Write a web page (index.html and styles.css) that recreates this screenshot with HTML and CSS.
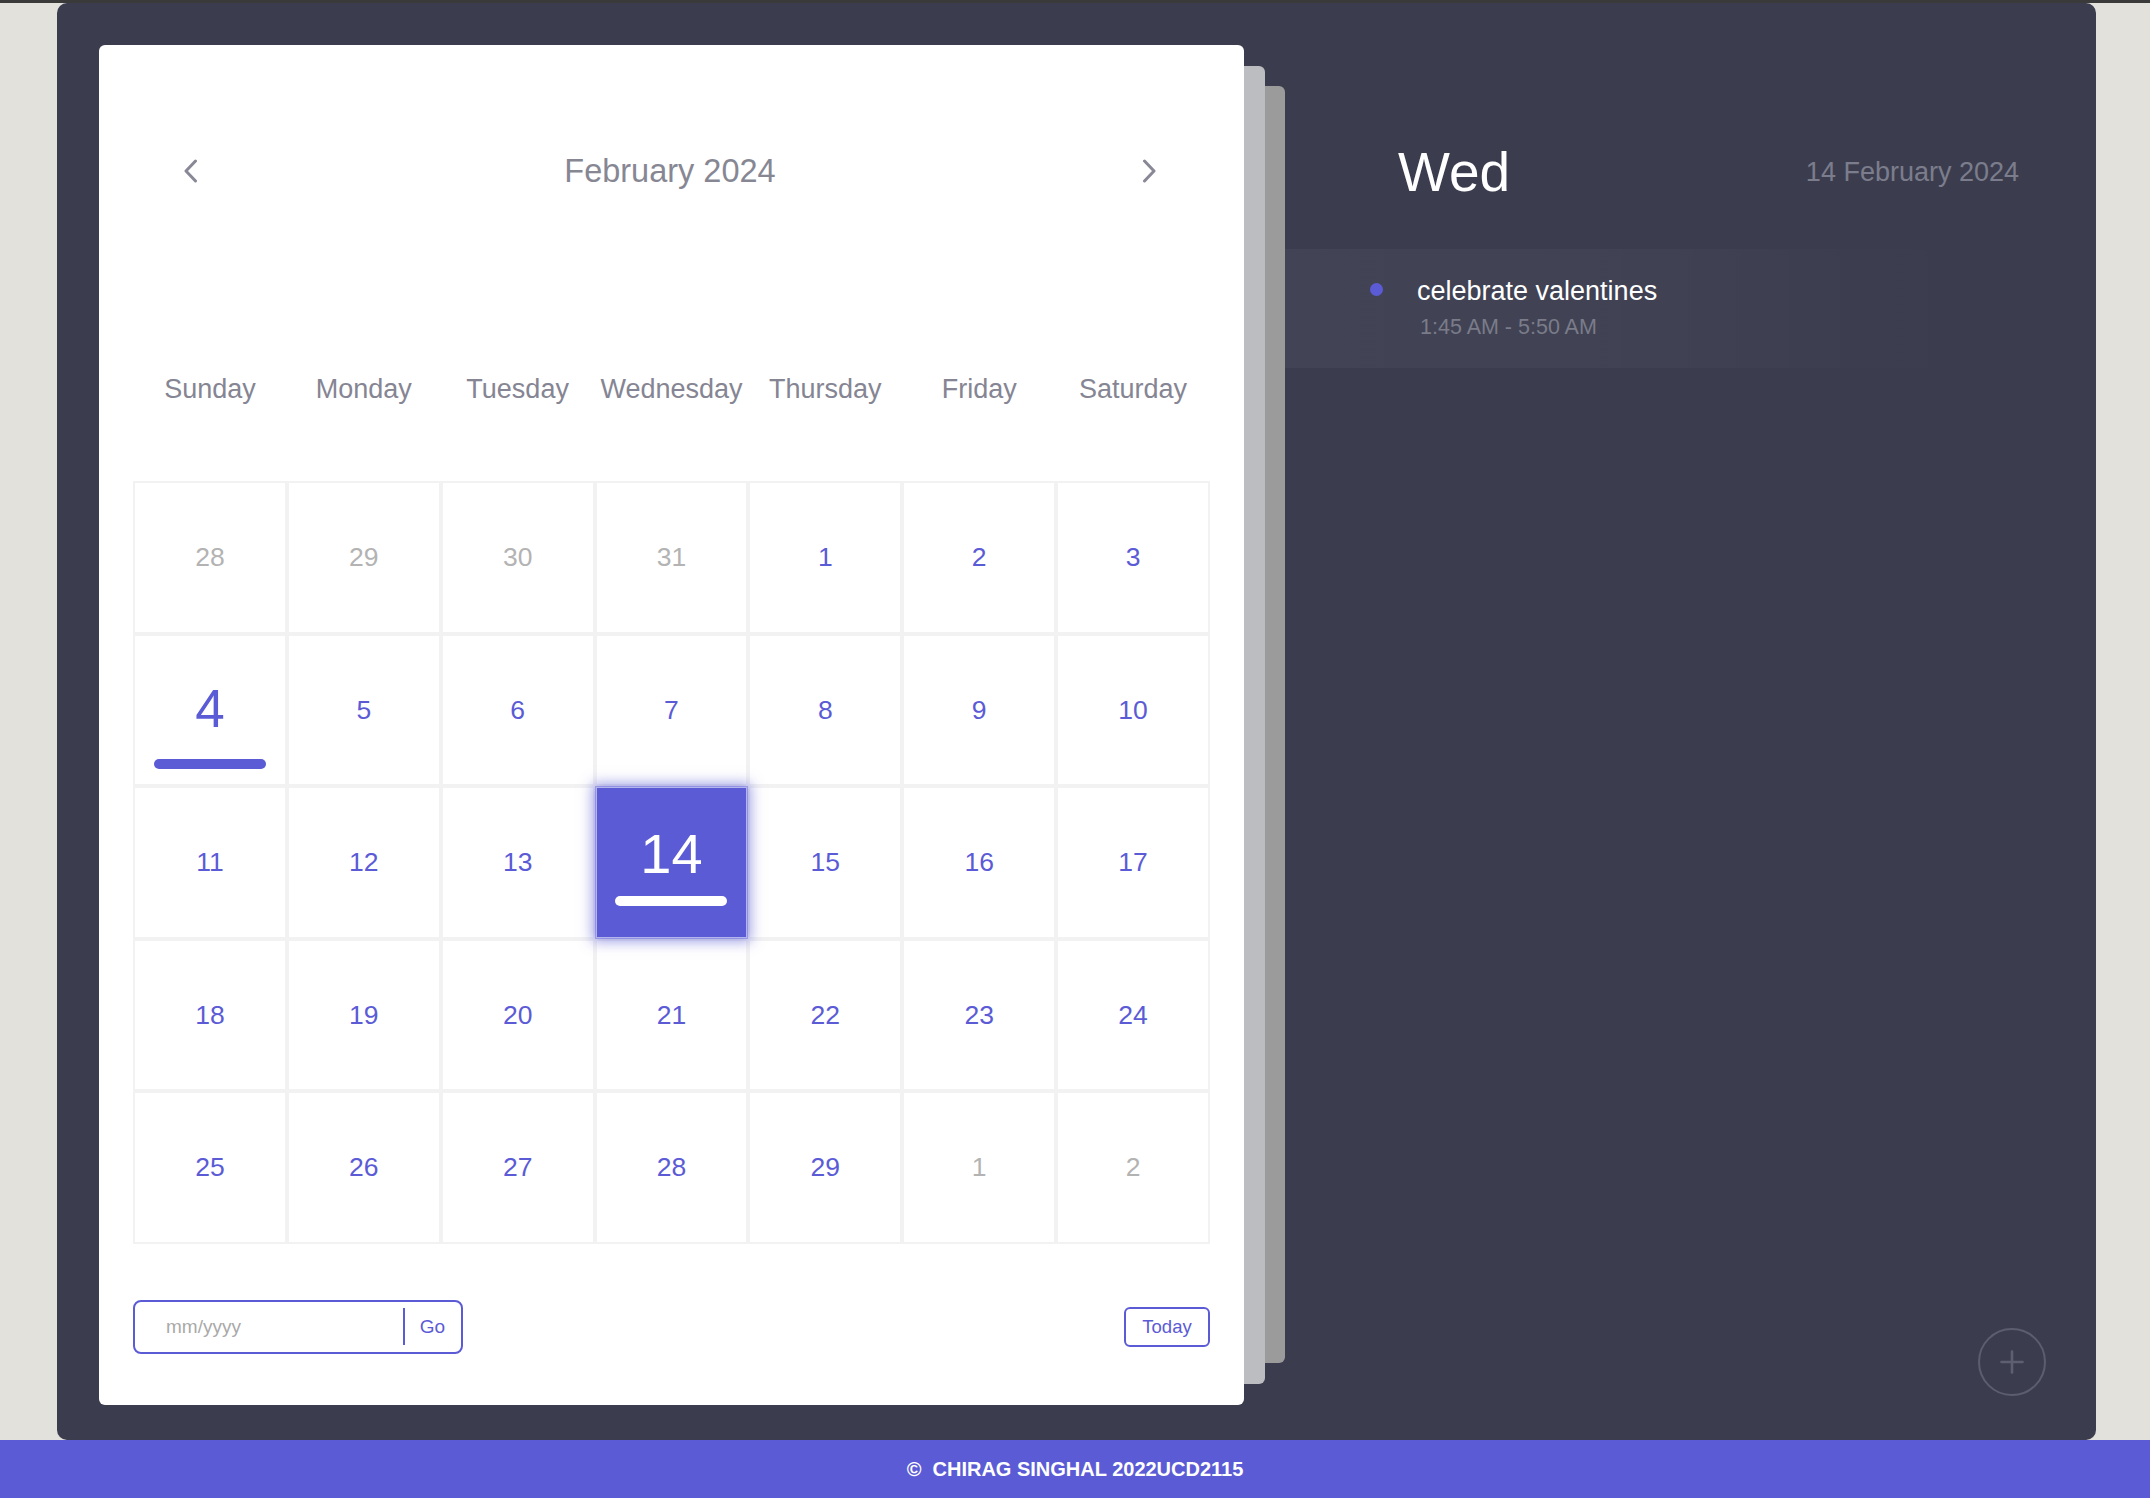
FILE: index.html
```html
<!DOCTYPE html>
<html lang="en">
<head>
<meta charset="utf-8">
<title>Calendar</title>
<link rel="stylesheet" href="styles.css">
</head>
<body>
<div class="topline"></div>
<main class="app">
  <section class="cal-wrap">
    <div class="cal-card">
      <header class="cal-head">
        <button class="nav" aria-label="Previous month">
          <svg width="15" height="24" viewBox="0 0 15 24"><polyline points="12.5,2 3,12 12.5,22" fill="none" stroke="#888896" stroke-width="3" stroke-linecap="round" stroke-linejoin="round"/></svg>
        </button>
        <h2 class="month">February 2024</h2>
        <button class="nav" aria-label="Next month">
          <svg width="15" height="24" viewBox="0 0 15 24"><polyline points="2.5,2 12,12 2.5,22" fill="none" stroke="#888896" stroke-width="3" stroke-linecap="round" stroke-linejoin="round"/></svg>
        </button>
      </header>
      <div class="weekdays">
        <span>Sunday</span><span>Monday</span><span>Tuesday</span><span>Wednesday</span><span>Thursday</span><span>Friday</span><span>Saturday</span>
      </div>
      <div class="grid">
        <div class="cell other"><span class="num">28</span></div>
        <div class="cell other"><span class="num">29</span></div>
        <div class="cell other"><span class="num">30</span></div>
        <div class="cell other"><span class="num">31</span></div>
        <div class="cell"><span class="num">1</span></div>
        <div class="cell"><span class="num">2</span></div>
        <div class="cell"><span class="num">3</span></div>

        <div class="cell today"><span class="num">4</span><span class="bar"></span></div>
        <div class="cell"><span class="num">5</span></div>
        <div class="cell"><span class="num">6</span></div>
        <div class="cell"><span class="num">7</span></div>
        <div class="cell"><span class="num">8</span></div>
        <div class="cell"><span class="num">9</span></div>
        <div class="cell"><span class="num">10</span></div>

        <div class="cell"><span class="num">11</span></div>
        <div class="cell"><span class="num">12</span></div>
        <div class="cell"><span class="num">13</span></div>
        <div class="cell selected"><span class="num">14</span><span class="bar"></span></div>
        <div class="cell"><span class="num">15</span></div>
        <div class="cell"><span class="num">16</span></div>
        <div class="cell"><span class="num">17</span></div>

        <div class="cell"><span class="num">18</span></div>
        <div class="cell"><span class="num">19</span></div>
        <div class="cell"><span class="num">20</span></div>
        <div class="cell"><span class="num">21</span></div>
        <div class="cell"><span class="num">22</span></div>
        <div class="cell"><span class="num">23</span></div>
        <div class="cell"><span class="num">24</span></div>

        <div class="cell"><span class="num">25</span></div>
        <div class="cell"><span class="num">26</span></div>
        <div class="cell"><span class="num">27</span></div>
        <div class="cell"><span class="num">28</span></div>
        <div class="cell"><span class="num">29</span></div>
        <div class="cell other"><span class="num">1</span></div>
        <div class="cell other"><span class="num">2</span></div>
      </div>
      <div class="cal-foot">
        <div class="jump">
          <input class="jump-input" type="text" placeholder="mm/yyyy">
          <button class="go">Go</button>
        </div>
        <button class="today-btn">Today</button>
      </div>
    </div>
  </section>
  <aside class="side">
    <div class="side-head">
      <span class="day">Wed</span>
      <span class="date">14 February 2024</span>
    </div>
    <ul class="events">
      <li class="event">
        <span class="dot"></span>
        <div class="ev-body">
          <div class="ev-title">celebrate valentines</div>
          <div class="ev-time">1:45 AM - 5:50 AM</div>
        </div>
      </li>
    </ul>
    <button class="add" aria-label="Add event">
      <svg width="24" height="24" viewBox="0 0 24 24"><path d="M12 1.5V22.5M1.5 12H22.5" stroke="#5e6072" stroke-width="2.6" stroke-linecap="round"/></svg>
    </button>
  </aside>
</main>
<footer class="foot">©&nbsp; CHIRAG SINGHAL 2022UCD2115</footer>
</body>
</html>
```

FILE: styles.css
```css
* { box-sizing: border-box; }

html, body {
  margin: 0;
  padding: 0;
}

body {
  background: #e2e1dc;
  font-family: "Liberation Sans", Arial, Helvetica, sans-serif;
  width: 2150px;
  height: 1498px;
  overflow: hidden;
}

.topline {
  height: 3px;
  background: #3a3a3a;
}

.app {
  display: flex;
  width: 2039px;
  height: 1437px;
  margin-left: 57px;
  padding: 42px 0 35px 42px;
  background: #3b3d4f;
  border-radius: 10px;
}

/* calendar column with stacked paper */
.cal-wrap {
  position: relative;
  z-index: 0;
  flex-shrink: 0;
  width: 1145px;
  margin-right: 41px;
}

.cal-wrap::before,
.cal-wrap::after {
  content: "";
  position: absolute;
  z-index: -1;
  left: 60px;
  border-radius: 6px;
}

.cal-wrap::before {
  top: 41px;
  bottom: 42px;
  right: -41px;
  background: #9b9b9b;
}

.cal-wrap::after {
  top: 21px;
  bottom: 21px;
  right: -21px;
  background: #bcbdc1;
}

.cal-card {
  height: 100%;
  background: #ffffff;
  border-radius: 6px;
  padding: 96px 34px 51px 34px;
  display: flex;
  flex-direction: column;
}

.cal-head {
  display: flex;
  align-items: center;
  justify-content: space-between;
  height: 60px;
  padding: 0 53px 0 50px;
}

.nav {
  border: 0;
  background: none;
  padding: 0;
  width: 15px;
  height: 24px;
  display: flex;
}

.month {
  margin: 0;
  font-weight: 400;
  font-size: 32.5px;
  color: #878794;
  line-height: 40px;
}

.weekdays {
  margin-top: 168px;
  display: grid;
  grid-template-columns: repeat(7, 1fr);
  height: 40px;
  line-height: 40px;
  font-size: 27px;
  color: #858593;
  text-align: center;
}

.grid {
  margin-top: 72px;
  display: grid;
  grid-template-columns: repeat(7, 1fr);
  grid-auto-rows: 152.6px;
}

.cell {
  border: 2px solid #f2f2f3;
  display: flex;
  flex-direction: column;
  align-items: center;
  justify-content: center;
  color: #5b5bd6;
}

.num {
  font-size: 26.5px;
  line-height: 1;
}

.cell.other { color: #b3b3b3; }

.bar {
  display: block;
  width: 112px;
  height: 10px;
  border-radius: 5px;
  background: #5b5bd6;
}

.cell.today .num {
  font-size: 53px;
}

.cell.today .bar {
  margin-top: 24px;
  margin-bottom: -31px;
}

.cell.selected {
  position: relative;
  z-index: 1;
  background: #5b5bd6;
  background-clip: padding-box;
  border-color: rgba(91, 91, 214, 0.45);
  color: #ffffff;
  box-shadow: 0 0 12px 3px rgba(91, 91, 214, 0.55);
}

.cell.selected .num {
  font-size: 56px;
}

.cell.selected .bar {
  background: #ffffff;
  margin-top: 14.5px;
  margin-bottom: -7px;
}

.cal-foot {
  margin-top: 56px;
  display: flex;
  align-items: center;
  justify-content: space-between;
  height: 54px;
}

.jump {
  display: flex;
  align-items: center;
  width: 330px;
  height: 54px;
  border: 2px solid #5b5bd6;
  border-radius: 8px;
}

.jump-input {
  flex: 1;
  min-width: 0;
  height: 100%;
  border: 0;
  outline: none;
  background: transparent;
  padding: 0 0 0 31px;
  font-family: inherit;
  font-size: 19px;
  color: #333;
}

.jump-input::placeholder { color: #a9a9a9; }

.go {
  height: 37px;
  border: 0;
  border-left: 2px solid #5b5bd6;
  background: none;
  padding: 0 16px 0 15px;
  font-family: inherit;
  font-size: 19px;
  color: #5b5bd6;
}

.today-btn {
  width: 86px;
  height: 40px;
  border: 2px solid #5b5bd6;
  border-radius: 6px;
  background: #ffffff;
  padding: 0;
  font-family: inherit;
  font-size: 18.5px;
  color: #5b5bd6;
}

/* sidebar */
.side {
  flex: 1;
  display: flex;
  flex-direction: column;
  color: #ffffff;
}

.side-head {
  margin-top: 99px;
  height: 56px;
  display: flex;
  align-items: center;
  justify-content: space-between;
  padding: 0 77px 0 113px;
}

.day {
  font-size: 55px;
  line-height: 56px;
}

.date {
  font-size: 27px;
  color: #7b7d8c;
}

.events {
  list-style: none;
  margin: 49px 0 0 0;
  padding: 0;
}

.event {
  display: flex;
  align-items: flex-start;
  padding: 26px 0 28px 85px;
  background: linear-gradient(90deg, rgba(255, 255, 255, 0.035) 0%, rgba(255, 255, 255, 0.028) 45%, rgba(255, 255, 255, 0.008) 68%, rgba(255, 255, 255, 0) 85%);
}

.dot {
  width: 13px;
  height: 13px;
  border-radius: 50%;
  background: #5b5bd6;
  margin-top: 8px;
  margin-right: 34px;
  flex-shrink: 0;
}

.ev-title {
  font-size: 27px;
  line-height: 32px;
  color: #ffffff;
}

.ev-time {
  margin-top: 7px;
  margin-left: 3px;
  font-size: 21.5px;
  line-height: 26px;
  color: #7a7c8a;
}

.add {
  margin-top: auto;
  align-self: flex-end;
  margin-right: 50px;
  margin-bottom: 9px;
  width: 68px;
  height: 68px;
  border-radius: 50%;
  border: 2px solid #5c5e6f;
  background: transparent;
  padding: 0;
  display: flex;
  align-items: center;
  justify-content: center;
}

.foot {
  height: 58px;
  line-height: 58px;
  background: #5b5bd6;
  color: #ffffff;
  text-align: center;
  font-size: 20px;
  font-weight: 700;
}
```
